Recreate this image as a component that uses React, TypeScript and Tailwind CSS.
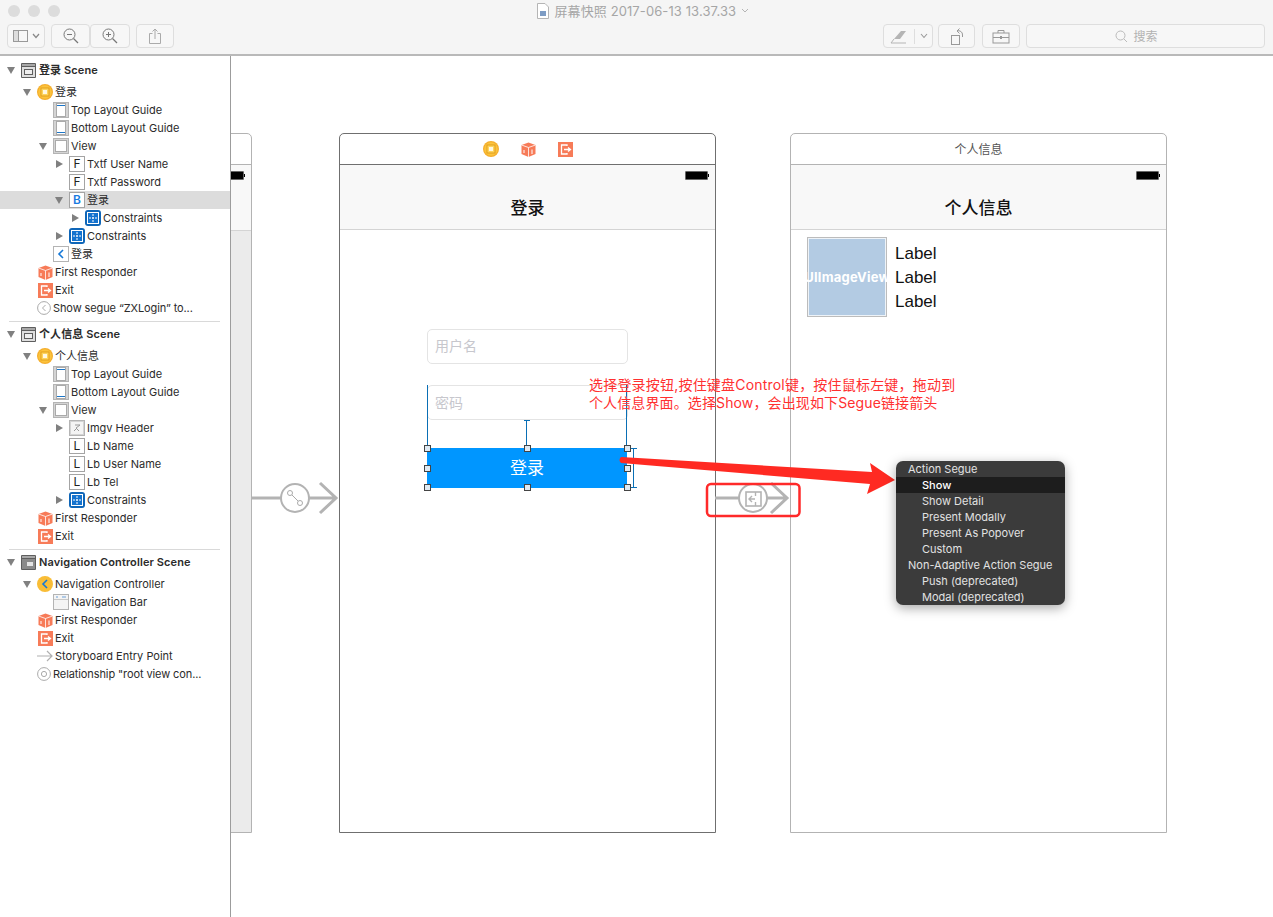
import type { ReactNode } from 'react'

type IconName =
  | 'scene' | 'navScene' | 'vc' | 'navVc' | 'topGuide' | 'bottomGuide' | 'view'
  | 'F' | 'B' | 'L' | 'constraints' | 'back' | 'responder' | 'exit' | 'segue'
  | 'image' | 'navBar' | 'entry' | 'relation'

type Row = { label: string; level: 0 | 1 | 2 | 3 | 4; icon: IconName; arrow?: 'open' | 'closed'; selected?: boolean; tight?: boolean }

const LEVELS = ['pl-[6px]', 'pl-[22px]', 'pl-[38px]', 'pl-[54px]', 'pl-[70px]']

const LOGIN_ROWS: Row[] = [
  { label: '登录', level: 1, icon: 'vc', arrow: 'open' },
  { label: 'Top Layout Guide', level: 2, icon: 'topGuide' },
  { label: 'Bottom Layout Guide', level: 2, icon: 'bottomGuide' },
  { label: 'View', level: 2, icon: 'view', arrow: 'open' },
  { label: 'Txtf User Name', level: 3, icon: 'F', arrow: 'closed' },
  { label: 'Txtf Password', level: 3, icon: 'F' },
  { label: '登录', level: 3, icon: 'B', arrow: 'open', selected: true },
  { label: 'Constraints', level: 4, icon: 'constraints', arrow: 'closed' },
  { label: 'Constraints', level: 3, icon: 'constraints', arrow: 'closed' },
  { label: '登录', level: 2, icon: 'back' },
  { label: 'First Responder', level: 1, icon: 'responder' },
  { label: 'Exit', level: 1, icon: 'exit' },
  { label: 'Show segue “ZXLogin” to...', level: 1, icon: 'segue', tight: true },
]

const INFO_ROWS: Row[] = [
  { label: '个人信息', level: 1, icon: 'vc', arrow: 'open' },
  { label: 'Top Layout Guide', level: 2, icon: 'topGuide' },
  { label: 'Bottom Layout Guide', level: 2, icon: 'bottomGuide' },
  { label: 'View', level: 2, icon: 'view', arrow: 'open' },
  { label: 'Imgv Header', level: 3, icon: 'image', arrow: 'closed' },
  { label: 'Lb Name', level: 3, icon: 'L' },
  { label: 'Lb User Name', level: 3, icon: 'L' },
  { label: 'Lb Tel', level: 3, icon: 'L' },
  { label: 'Constraints', level: 3, icon: 'constraints', arrow: 'closed' },
  { label: 'First Responder', level: 1, icon: 'responder' },
  { label: 'Exit', level: 1, icon: 'exit' },
]

const NAV_ROWS: Row[] = [
  { label: 'Navigation Controller', level: 1, icon: 'navVc', arrow: 'open' },
  { label: 'Navigation Bar', level: 2, icon: 'navBar' },
  { label: 'First Responder', level: 1, icon: 'responder' },
  { label: 'Exit', level: 1, icon: 'exit' },
  { label: 'Storyboard Entry Point', level: 1, icon: 'entry' },
  { label: 'Relationship "root view con...', level: 1, icon: 'relation', tight: true },
]

const MENU_ITEMS = [
  { label: 'Action Segue', head: true },
  { label: 'Show', active: true },
  { label: 'Show Detail' },
  { label: 'Present Modally' },
  { label: 'Present As Popover' },
  { label: 'Custom' },
  { label: 'Non-Adaptive Action Segue', head: true },
  { label: 'Push (deprecated)' },
  { label: 'Modal (deprecated)' },
]

function Tile({ children }: { children: ReactNode }) {
  return (
    <svg width="16" height="16" viewBox="0 0 16 16">
      <rect x="0.5" y="0.5" width="15" height="15" fill="#d4d4d4" stroke="#b4b4b4" />
      {children}
    </svg>
  )
}

function LetterTile({ letter, blue }: { letter: string; blue?: boolean }) {
  return (
    <span className={`flex h-4 w-4 items-center justify-center border border-[#a4a4a4] bg-white text-[12px] ${blue ? 'font-semibold text-[#1a7be0]' : 'text-[#222]'}`}>
      {letter}
    </span>
  )
}

function OutlineIcon({ name }: { name: IconName }) {
  switch (name) {
    case 'scene':
      return (
        <svg width="15" height="15" viewBox="0 0 15 15" className="-ml-[2px]">
          <rect width="15" height="15" rx="1" fill="#5e5e5e" />
          <rect x="1" y="1" width="13" height="2" fill="#a8a8a8" />
          <rect x="1" y="4" width="13" height="10" fill="#dedede" />
          <rect x="3.5" y="6.5" width="8" height="5" fill="#eee" stroke="#5e5e5e" />
        </svg>
      )
    case 'navScene':
      return (
        <svg width="15" height="15" viewBox="0 0 15 15" className="-ml-[2px]">
          <rect width="15" height="15" rx="1" fill="#5e5e5e" />
          <rect x="1" y="1" width="13" height="2" fill="#a8a8a8" />
          <rect x="1" y="4" width="13" height="10" fill="#8a8a8a" />
          <rect x="6" y="7" width="6" height="4" fill="#e4e4e4" />
        </svg>
      )
    case 'vc':
      return (
        <svg width="16" height="16" viewBox="0 0 16 16">
          <circle cx="8" cy="8" r="8" fill="#f5ae2c" />
          <circle cx="8" cy="8" r="6.8" fill="#fbc33c" />
          <rect x="4" y="4" width="8" height="8" fill="#fdd45e" stroke="#e39f1a" />
          <rect x="6" y="6" width="4" height="4" fill="#fff8e2" />
        </svg>
      )
    case 'navVc':
      return (
        <svg width="16" height="16" viewBox="0 0 16 16">
          <circle cx="8" cy="8" r="8" fill="#f9bd36" />
          <path d="M10 4 L6 8 L10 12" fill="none" stroke="#1478d8" strokeWidth="1.6" />
        </svg>
      )
    case 'topGuide':
      return <Tile><rect x="3.5" y="1.5" width="9" height="13" fill="#fff" stroke="#aaaaaa" /><rect x="4" y="3" width="8" height="1" fill="#1c76c8" /></Tile>
    case 'bottomGuide':
      return <Tile><rect x="3.5" y="1.5" width="9" height="13" fill="#fff" stroke="#aaaaaa" /><rect x="4" y="12" width="8" height="1" fill="#1c76c8" /></Tile>
    case 'view':
      return <Tile><rect x="2.5" y="2.5" width="11" height="11" fill="#fff" stroke="#aaaaaa" /></Tile>
    case 'F':
      return <LetterTile letter="F" />
    case 'L':
      return <LetterTile letter="L" />
    case 'B':
      return <LetterTile letter="B" blue />
    case 'constraints':
      return (
        <svg width="16" height="16" viewBox="0 0 16 16">
          <rect width="16" height="16" rx="3" fill="#0f66b8" />
          <rect x="2.5" y="2.5" width="11" height="11" fill="#1473cf" stroke="#fff" />
          <path d="M4 8 H12 M8 4 V12" stroke="#fff" strokeWidth="1" strokeDasharray="2 1" />
        </svg>
      )
    case 'back':
      return (
        <svg width="16" height="16" viewBox="0 0 16 16">
          <rect x="0.5" y="0.5" width="15" height="15" fill="#fff" stroke="#b4b4b4" />
          <path d="M10 4 L6 8 L10 12" fill="none" stroke="#1478d8" strokeWidth="1.6" />
        </svg>
      )
    case 'responder':
      return (
        <svg width="15" height="15" viewBox="0 0 15 15">
          <path d="M0.5 3 L7.5 0.5 L14.5 3 V12 L7.5 15 L0.5 12 Z" fill="#f77b58" />
          <path d="M0.5 3 L7.5 5.5 L14.5 3 M7.5 5.5 V15" fill="none" stroke="#fff" strokeWidth="0.8" />
          <path d="M11 7.5 V12 M3 8 V11" stroke="#fff" strokeWidth="1" />
        </svg>
      )
    case 'exit':
      return (
        <svg width="15" height="15" viewBox="0 0 15 15">
          <rect width="15" height="15" fill="#f77b58" />
          <path d="M9 4 V3 H3.5 V12 H9 V11" fill="none" stroke="#fff" strokeWidth="1.3" />
          <path d="M6 7.5 H12 M10 5.5 L12.5 7.5 L10 9.5" fill="none" stroke="#fff" strokeWidth="1.3" />
        </svg>
      )
    case 'segue':
      return (
        <svg width="14" height="14" viewBox="0 0 14 14">
          <circle cx="7" cy="7" r="6.4" fill="#fff" stroke="#aaa" />
          <path d="M8.5 4 L5.5 7 L8.5 10" fill="none" stroke="#aaa" />
        </svg>
      )
    case 'image':
      return (
        <Tile>
          <rect x="2" y="2" width="12" height="12" fill="#f4f4f4" />
          <path d="M6 5 H11 L7 8 L10 11 M5 11 L8 8" fill="none" stroke="#999" />
        </Tile>
      )
    case 'navBar':
      return (
        <svg width="16" height="16" viewBox="0 0 16 16">
          <rect x="0.5" y="0.5" width="15" height="15" fill="#f4f4f4" stroke="#b4b4b4" />
          <path d="M1 5.5 H15" stroke="#c8c8c8" />
          <path d="M3 3 H5 M9 3 H13" stroke="#6a9fd8" />
        </svg>
      )
    case 'entry':
      return (
        <svg width="16" height="12" viewBox="0 0 16 12">
          <path d="M0 6 H15 M10 1 L15 6 L10 11" fill="none" stroke="#b0b0b0" strokeWidth="1.2" />
        </svg>
      )
    case 'relation':
      return (
        <svg width="14" height="14" viewBox="0 0 14 14">
          <circle cx="7" cy="7" r="6.4" fill="#fff" stroke="#aaa" />
          <circle cx="7" cy="7" r="2.6" fill="#fff" stroke="#aaa" />
        </svg>
      )
  }
}

function Triangle({ open }: { open: boolean }) {
  return (
    <svg width="10" height="10" viewBox="0 0 10 10">
      {open ? <path d="M1 2 H9 L5 9 Z" fill="#808080" /> : <path d="M2 1 L9 5 L2 9 Z" fill="#808080" />}
    </svg>
  )
}

function TreeRow({ row }: { row: Row }) {
  return (
    <div className={`flex h-[18px] items-center ${LEVELS[row.level]} ${row.selected ? 'bg-[#dcdcdc]' : ''}`}>
      <span className="flex w-[15px] shrink-0 items-center">
        {row.arrow && <Triangle open={row.arrow === 'open'} />}
      </span>
      <span className={`flex shrink-0 items-center justify-center ${row.tight ? 'w-[14px]' : 'w-4'}`}>
        <OutlineIcon name={row.icon} />
      </span>
      <span className={`ml-[2px] whitespace-nowrap leading-[18px] text-[#2b2b2b] ${row.tight ? 'tracking-[-0.1px]' : ''}`}>{row.label}</span>
    </div>
  )
}

function SceneHeader({ label, icon }: { label: string; icon: IconName }) {
  return (
    <div className="flex h-[18px] items-center pl-[6px]">
      <span className="flex w-[15px] shrink-0 items-center"><Triangle open /></span>
      <span className="flex w-4 shrink-0 items-center justify-center"><OutlineIcon name={icon} /></span>
      <span className="ml-[2px] whitespace-nowrap font-semibold leading-[18px] tracking-[0.1px] text-[#2b2b2b]">{label}</span>
    </div>
  )
}

function Separator() {
  return <div className="mb-[3px] ml-[9px] mt-[4px] h-px w-[211px] bg-[#d9d9d9]" />
}

function Sidebar() {
  return (
    <aside className="w-[231px] shrink-0 border-r border-[#9c9c9c] bg-white pt-[5px] text-[11px] leading-none">
      <SceneHeader label="登录 Scene" icon="scene" />
      <div className="mt-1">{LOGIN_ROWS.map((r, i) => <TreeRow key={i} row={r} />)}</div>
      <Separator />
      <SceneHeader label="个人信息 Scene" icon="scene" />
      <div className="mt-1">{INFO_ROWS.map((r, i) => <TreeRow key={i} row={r} />)}</div>
      <Separator />
      <SceneHeader label="Navigation Controller Scene" icon="navScene" />
      <div className="mt-1">{NAV_ROWS.map((r, i) => <TreeRow key={i} row={r} />)}</div>
    </aside>
  )
}

function ToolButton({ className, children }: { className: string; children: ReactNode }) {
  return (
    <div className={`flex h-[24px] items-center justify-center rounded-[4px] border border-[#dedede] bg-[#f7f7f7] ${className}`}>
      {children}
    </div>
  )
}

function Toolbar() {
  return (
    <header className="relative h-[56px] shrink-0 border-b-2 border-[#b9b9b9] bg-[#f5f5f5]">
      <div className="flex gap-2 pl-2 pt-[5px]">
        <span className="h-3 w-3 rounded-full bg-[#dcdcdc]" />
        <span className="h-3 w-3 rounded-full bg-[#dcdcdc]" />
        <span className="h-3 w-3 rounded-full bg-[#dcdcdc]" />
      </div>
      <div className="absolute left-1/2 top-[3px] ml-[-100px] flex items-center text-[13px] leading-4 tracking-[0.1px] text-[#a6a6a6]">
        <svg width="12" height="16" viewBox="0 0 12 16" className="mr-[6px]">
          <path d="M0.5 0.5 H8 L11.5 4 V15.5 H0.5 Z" fill="#fff" stroke="#b5b5b5" />
          <rect x="3" y="8" width="6" height="5" fill="#7d9cc4" />
        </svg>
        <span>屏幕快照 2017-06-13 13.37.33</span>
        <svg width="10" height="8" viewBox="0 0 10 8" className="ml-[4px]"><path d="M2 2 L5 5 L8 2" fill="none" stroke="#b5b5b5" /></svg>
      </div>
      <div className="mt-[7px] flex items-center pl-[7px] pr-2">
        <ToolButton className="w-[38px] gap-1">
          <svg width="15" height="12" viewBox="0 0 15 12"><rect x="0.5" y="0.5" width="14" height="11" fill="none" stroke="#999" /><rect x="1" y="1" width="4.5" height="10" fill="#ddd" /><path d="M5.5 0.5 V11.5" stroke="#999" /></svg>
          <svg width="8" height="6" viewBox="0 0 8 6"><path d="M1 1 L4 4.5 L7 1" fill="none" stroke="#888" strokeWidth="1.2" /></svg>
        </ToolButton>
        <ToolButton className="ml-[6px] w-[39px]">
          <svg width="16" height="16" viewBox="0 0 16 16"><circle cx="6.5" cy="6.5" r="5.5" fill="none" stroke="#777" /><path d="M10.5 10.5 L15 15" stroke="#777" strokeWidth="1.2" /><path d="M4 6.5 H9" stroke="#777" /></svg>
        </ToolButton>
        <ToolButton className="w-[40px]">
          <svg width="16" height="16" viewBox="0 0 16 16"><circle cx="6.5" cy="6.5" r="5.5" fill="none" stroke="#777" /><path d="M10.5 10.5 L15 15" stroke="#777" strokeWidth="1.2" /><path d="M4 6.5 H9 M6.5 4 V9" stroke="#777" /></svg>
        </ToolButton>
        <ToolButton className="ml-[6px] w-[38px]">
          <svg width="12" height="16" viewBox="0 0 12 16"><path d="M3.5 5.5 H0.5 V15.5 H11.5 V5.5 H8.5" fill="none" stroke="#aaa" /><path d="M6 11 V1 M3.5 3.5 L6 1 L8.5 3.5" fill="none" stroke="#aaa" /></svg>
        </ToolButton>
        <div className="ml-auto flex items-center">
          <div className="flex h-[24px] w-[50px] items-center rounded-[4px] border border-[#dedede] bg-[#f7f7f7]">
            <span className="flex w-[31px] justify-center border-r border-[#dedede]">
              <svg width="18" height="15" viewBox="0 0 18 15"><path d="M4 10 L11 2 H16 L10 10 Z" fill="#b5b5b5" /><path d="M4 10 L1 14 H16" fill="none" stroke="#b5b5b5" /></svg>
            </span>
            <span className="flex flex-1 justify-center">
              <svg width="8" height="6" viewBox="0 0 8 6"><path d="M1 1 L4 4.5 L7 1" fill="none" stroke="#999" strokeWidth="1.1" /></svg>
            </span>
          </div>
          <ToolButton className="ml-[5px] w-[37px]">
            <svg width="16" height="17" viewBox="0 0 16 17"><rect x="2.5" y="7.5" width="8" height="9" fill="none" stroke="#999" /><path d="M13.5 9 V7 A4 4 0 0 0 8 3 M8 3 L10.5 0.5 M8 3 L10.5 5.5" fill="none" stroke="#999" /></svg>
          </ToolButton>
          <ToolButton className="ml-[7px] w-[38px]">
            <svg width="18" height="15" viewBox="0 0 18 15"><rect x="1" y="4" width="16" height="10" fill="none" stroke="#999" /><path d="M6 4 V1.5 H12 V4 M1 8.5 H17" fill="none" stroke="#999" /><rect x="8" y="7" width="2" height="3" fill="#999" /></svg>
          </ToolButton>
          <ToolButton className="ml-[6px] w-[239px] gap-[5px] pr-[18px] pt-[1px] text-xs text-[#b2b2b2]">
            <svg width="13" height="13" viewBox="0 0 13 13"><circle cx="5.5" cy="5.5" r="4.5" fill="none" stroke="#bbb" /><path d="M9 9 L12 12" stroke="#bbb" /></svg>
            <span>搜索</span>
          </ToolButton>
        </div>
      </div>
    </header>
  )
}

function Battery() {
  return (
    <span className="flex items-center">
      <span className="h-[9px] w-[23px] rounded-[1px] border border-[#666] bg-black" />
      <span className="h-[3px] w-px bg-black" />
    </span>
  )
}

function Handle({ className }: { className: string }) {
  return <span className={`absolute h-[7px] w-[7px] border border-[#444] bg-[#dfe9f2] ${className}`} />
}

function LoginScene() {
  return (
    <section className="absolute left-[108px] top-[77px] h-[700px] w-[377px] rounded-t-[5px] border border-[#6f6f6f] bg-white">
      <div className="flex h-[31px] items-center justify-center gap-[22px] border-b border-[#6f6f6f]">
        <OutlineIcon name="vc" />
        <OutlineIcon name="responder" />
        <OutlineIcon name="exit" />
      </div>
      <div className="h-[65px] border-b border-[#d4d4d4] bg-[#f8f8f8]">
        <div className="flex justify-end pr-[6px] pt-[6px]"><Battery /></div>
        <p className="mt-[16px] text-center text-[17px] font-medium leading-6 text-[#111]">登录</p>
      </div>
      <div className="pl-[87px] pt-[99px]">
        <div className="flex h-[35px] w-[201px] items-center rounded-[5px] border border-[#e4e4e4] pb-[2px] pl-[7px] text-[14px] text-[#c7c7cd]">用户名</div>
        <div className="mt-[21px] flex h-[35px] w-[201px] items-center rounded-[5px] border border-[#e4e4e4] pl-[7px] text-[14px] text-[#c7c7cd]">密码</div>
        <div className="relative mt-[28px] h-[40px] w-[200px]">
          <div className="flex h-full items-center justify-center bg-[#0096ff] pt-[2px] text-[17px] text-white">登录</div>
          <span className="absolute bottom-full left-0 h-[63px] w-px bg-[#0a6fb5]" />
          <span className="absolute bottom-full right-0 h-[63px] w-px bg-[#0a6fb5]" />
          <span className="absolute bottom-full left-[99px] h-[28px] w-px bg-[#0a6fb5]" />
          <span className="absolute bottom-full left-[97px] mb-[27px] h-px w-[6px] bg-[#0a6fb5]" />
          <span className="absolute left-[206px] top-0 h-full w-px bg-[#0a6fb5]" />
          <span className="absolute left-[203px] top-0 h-px w-[7px] bg-[#0a6fb5]" />
          <span className="absolute bottom-0 left-[203px] h-px w-[7px] bg-[#0a6fb5]" />
          <Handle className="-left-[3px] -top-[3px]" />
          <Handle className="left-[97px] -top-[3px]" />
          <Handle className="left-[197px] -top-[3px]" />
          <Handle className="-left-[3px] top-[17px]" />
          <Handle className="left-[197px] top-[17px]" />
          <Handle className="-left-[3px] -bottom-[3px]" />
          <Handle className="left-[97px] -bottom-[3px]" />
          <Handle className="left-[197px] -bottom-[3px]" />
        </div>
      </div>
    </section>
  )
}

function InfoScene() {
  return (
    <section className="absolute left-[559px] top-[77px] h-[700px] w-[377px] rounded-t-[5px] border border-[#b3b3b3] bg-white">
      <div className="flex h-[31px] items-center justify-center border-b border-[#b3b3b3] pt-[2px] text-xs text-[#555]">个人信息</div>
      <div className="h-[65px] border-b border-[#d4d4d4] bg-[#f8f8f8]">
        <div className="flex justify-end pr-[6px] pt-[6px]"><Battery /></div>
        <p className="mt-[16px] text-center text-[17px] font-medium leading-6 text-[#111]">个人信息</p>
      </div>
      <div className="flex pl-[16px] pt-[7px]">
        <div className="flex h-[80px] w-[80px] items-center justify-center border border-[#bcbcbc] bg-[#b3cbe3] pt-[2px] shadow-[inset_0_0_0_1px_#eef3f8]">
          <span className="whitespace-nowrap text-[13px] font-bold tracking-[0.2px] text-white">UIImageView</span>
        </div>
        <div className="ml-[8px] pt-[5px] font-['Liberation_Sans',sans-serif] text-[17px] leading-[24px] text-[#111]">
          <p>Label</p>
          <p>Label</p>
          <p>Label</p>
        </div>
      </div>
    </section>
  )
}

function CutScene() {
  return (
    <section className="absolute left-[-4px] top-[77px] flex h-[700px] w-[25px] flex-col rounded-tr-[5px] border border-[#b3b3b3] bg-white">
      <div className="h-[31px] shrink-0 border-b border-[#b3b3b3]" />
      <div className="h-[65px] shrink-0 bg-[#f8f8f8] pt-[6px]">
        <div className="flex justify-end pr-[6px]"><Battery /></div>
      </div>
      <div className="flex-1 border-t border-[#d4d4d4] bg-[#ebebeb]" />
    </section>
  )
}

function SegueMenu() {
  return (
    <div className="absolute left-[665px] top-[405px] w-[169px] overflow-hidden rounded-[7px] bg-[#3b3b3b] shadow-[0_3px_12px_rgba(0,0,0,0.35)]">
      {MENU_ITEMS.map((item) => (
        <div
          key={item.label}
          className={`flex h-4 items-center text-[11px] leading-4 ${item.head ? 'pl-3' : 'pl-[26px]'} ${item.active ? 'bg-[#1d1d1d] font-medium text-white' : 'text-[#e2e2e2]'}`}
        >
          {item.label}
        </div>
      ))}
    </div>
  )
}

// 画布上的连线和红色标注
function CanvasDrawing() {
  return (
    <svg className="absolute inset-0 h-full w-full" viewBox="231 56 1042 861">
      <path d="M252 498 H281" stroke="#b3b3b3" strokeWidth="3" />
      <circle cx="295" cy="498" r="14" fill="#fff" stroke="#b3b3b3" strokeWidth="2" />
      <path d="M309 498 H335 M320 483 L336 498 L320 513" fill="none" stroke="#b3b3b3" strokeWidth="3" />
      <circle cx="290" cy="493" r="2.5" fill="#fff" stroke="#aaa" />
      <circle cx="300" cy="503" r="2.5" fill="#fff" stroke="#aaa" />
      <path d="M292 495 L298 501" stroke="#aaa" />

      <path d="M715 498 H739" stroke="#b3b3b3" strokeWidth="3" />
      <circle cx="753" cy="498" r="14" fill="#fff" stroke="#b3b3b3" strokeWidth="2" />
      <path d="M767 498 H787 M771 483 L787 498 L771 513" fill="none" stroke="#b3b3b3" strokeWidth="3" />
      <rect x="746" y="492" width="15" height="14" fill="none" stroke="#b3b3b3" strokeWidth="1.6" />
      <path d="M755.5 492 V496 M755.5 502 V506 M755 499 H749 M752 496 L749 499 L752 502" fill="none" stroke="#b3b3b3" strokeWidth="1.4" />
      <rect x="707" y="484" width="92.5" height="32" rx="4" fill="none" stroke="#ff2a2a" strokeWidth="2.5" />

      <path d="M621 457 L872 472 L870 463 L895 480 L867 494 L870 484 L621 463 Q618 460 621 457 Z" fill="#ff2a22" />
    </svg>
  )
}

function Canvas() {
  return (
    <main className="relative flex-1 overflow-hidden bg-white">
      <CutScene />
      <LoginScene />
      <InfoScene />
      <CanvasDrawing />
      <div className="absolute left-[358px] top-[320px] whitespace-nowrap text-[14px] leading-[18px] text-[#ff3030]">
        <p className="tracking-[0.2px]">选择登录按钮,按住键盘Control键，按住鼠标左键，拖动到</p>
        <p className="tracking-[0.12px]">个人信息界面。选择Show，会出现如下Segue链接箭头</p>
      </div>
      <SegueMenu />
    </main>
  )
}

export default function App() {
  return (
    <div className="flex h-[917px] w-[1273px] flex-col overflow-hidden bg-white font-['Inter','Noto_Sans_CJK_SC',sans-serif]">
      <Toolbar />
      <div className="flex min-h-0 flex-1">
        <Sidebar />
        <Canvas />
      </div>
    </div>
  )
}
